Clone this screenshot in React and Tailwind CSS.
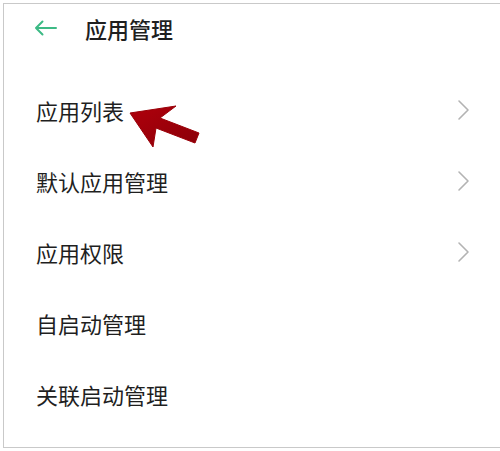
import React from 'react';

const items = [
  { label: '应用列表', arrow: true },
  { label: '默认应用管理', arrow: true },
  { label: '应用权限', arrow: true },
  { label: '自启动管理', arrow: false },
  { label: '关联启动管理', arrow: false },
];

function Chevron() {
  return (
    <svg width="14" height="22" viewBox="0 0 14 22" fill="none">
      <path d="M2 2 L11 11 L2 20" stroke="#b3b3b3" strokeWidth="1.6" strokeLinecap="round" strokeLinejoin="round" />
    </svg>
  );
}

export default function App() {
  return (
    <div className="relative w-[500px] h-[451px] bg-white overflow-hidden" style={{ fontFamily: '"Noto Sans CJK SC", "Noto Sans", sans-serif' }}>
      <div className="mt-[3px] ml-[3px] w-[520px] h-[445px] border-l border-t border-b border-[#c9c9c9] text-[#1f1f1f]">
        <div className="h-[48px] flex items-center pl-[30px]">
          <svg width="24" height="16" viewBox="0 0 24 16" fill="none">
            <path d="M22 8 H2 M8.5 1.5 L2 8 L8.5 14.5" stroke="#3dba85" strokeWidth="2" strokeLinecap="round" strokeLinejoin="round" />
          </svg>
          <span className="ml-[27px] text-[22px] font-medium leading-none">应用管理</span>
        </div>
        <div className="pt-[22px]">
          {items.map((it) => (
            <div key={it.label} className="h-[71px] w-[497px] flex items-center justify-between pl-[32px] pr-[30px]">
              <span className="text-[22px] leading-none">{it.label}</span>
              {it.arrow && <Chevron />}
            </div>
          ))}
        </div>
      </div>
      <svg className="absolute left-0 top-0 pointer-events-none" width="500" height="451" viewBox="0 0 500 451">
        <defs>
          <linearGradient id="ar" x1="0" y1="0" x2="1" y2="1">
            <stop offset="0" stopColor="#b0000c" />
            <stop offset="1" stopColor="#8a0008" />
          </linearGradient>
        </defs>
        <polygon points="130,113 176,106 160,118 199,133 195,143 156,128 153,147" fill="url(#ar)" stroke="#9a0008" strokeWidth="1" strokeLinejoin="round" />
      </svg>
    </div>
  );
}
